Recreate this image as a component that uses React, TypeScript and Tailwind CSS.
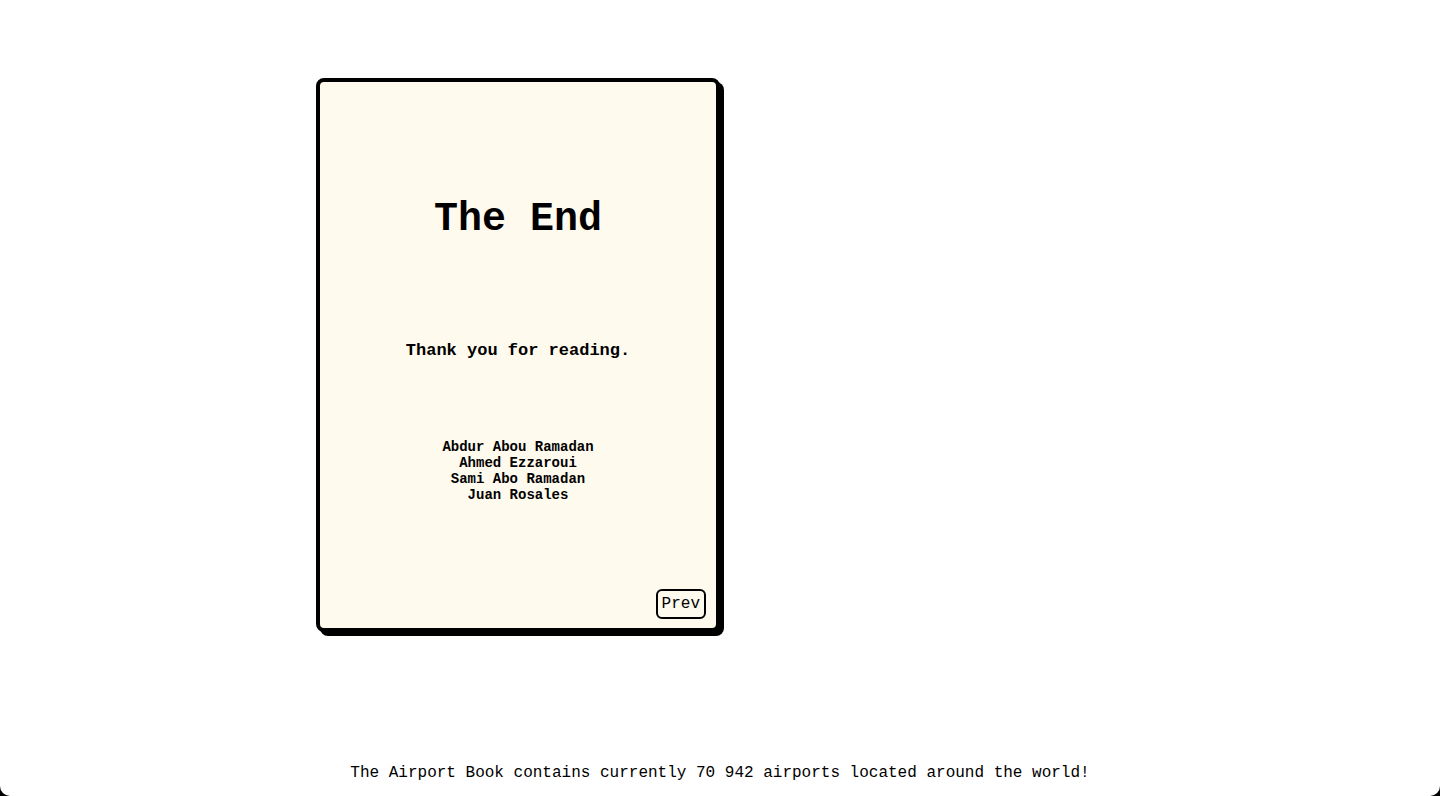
export default function App() {
  const authors = ['Abdur Abou Ramadan', 'Ahmed Ezzaroui', 'Sami Abo Ramadan', 'Juan Rosales']
  return (
    <div className="bg-black">
      <div className="h-[796px] flex flex-col bg-white rounded-b-[10px] text-black font-['Liberation_Mono',_'Courier_New',_monospace]">
        <main className="flex-1 flex justify-center pt-[78px]">
          <div className="w-[404px] h-[554px] bg-[#fffaee] border-4 border-black rounded-lg shadow-[4px_4px_0_#000] flex flex-col items-center">
            <h1 className="mt-[115px] text-[40px] leading-[45px] font-bold">The End</h1>
            <p className="mt-[99px] text-[17px] leading-[19px] font-bold">Thank you for reading.</p>
            <div className="mt-[79px] text-[14px] leading-[16px] font-bold text-center">
              {authors.map(a => <div key={a}>{a}</div>)}
            </div>
            <button className="mt-auto mb-[9px] mr-[10px] self-end border-2 border-black rounded-md px-1 py-1 text-[16px] leading-[18px]">Prev</button>
          </div>
          <div className="w-[404px]" />
        </main>
        <footer className="text-center text-[16px] leading-[18px] mb-[14px]">
          The Airport Book contains currently 70 942 airports located around the world!
        </footer>
      </div>
    </div>
  )
}
